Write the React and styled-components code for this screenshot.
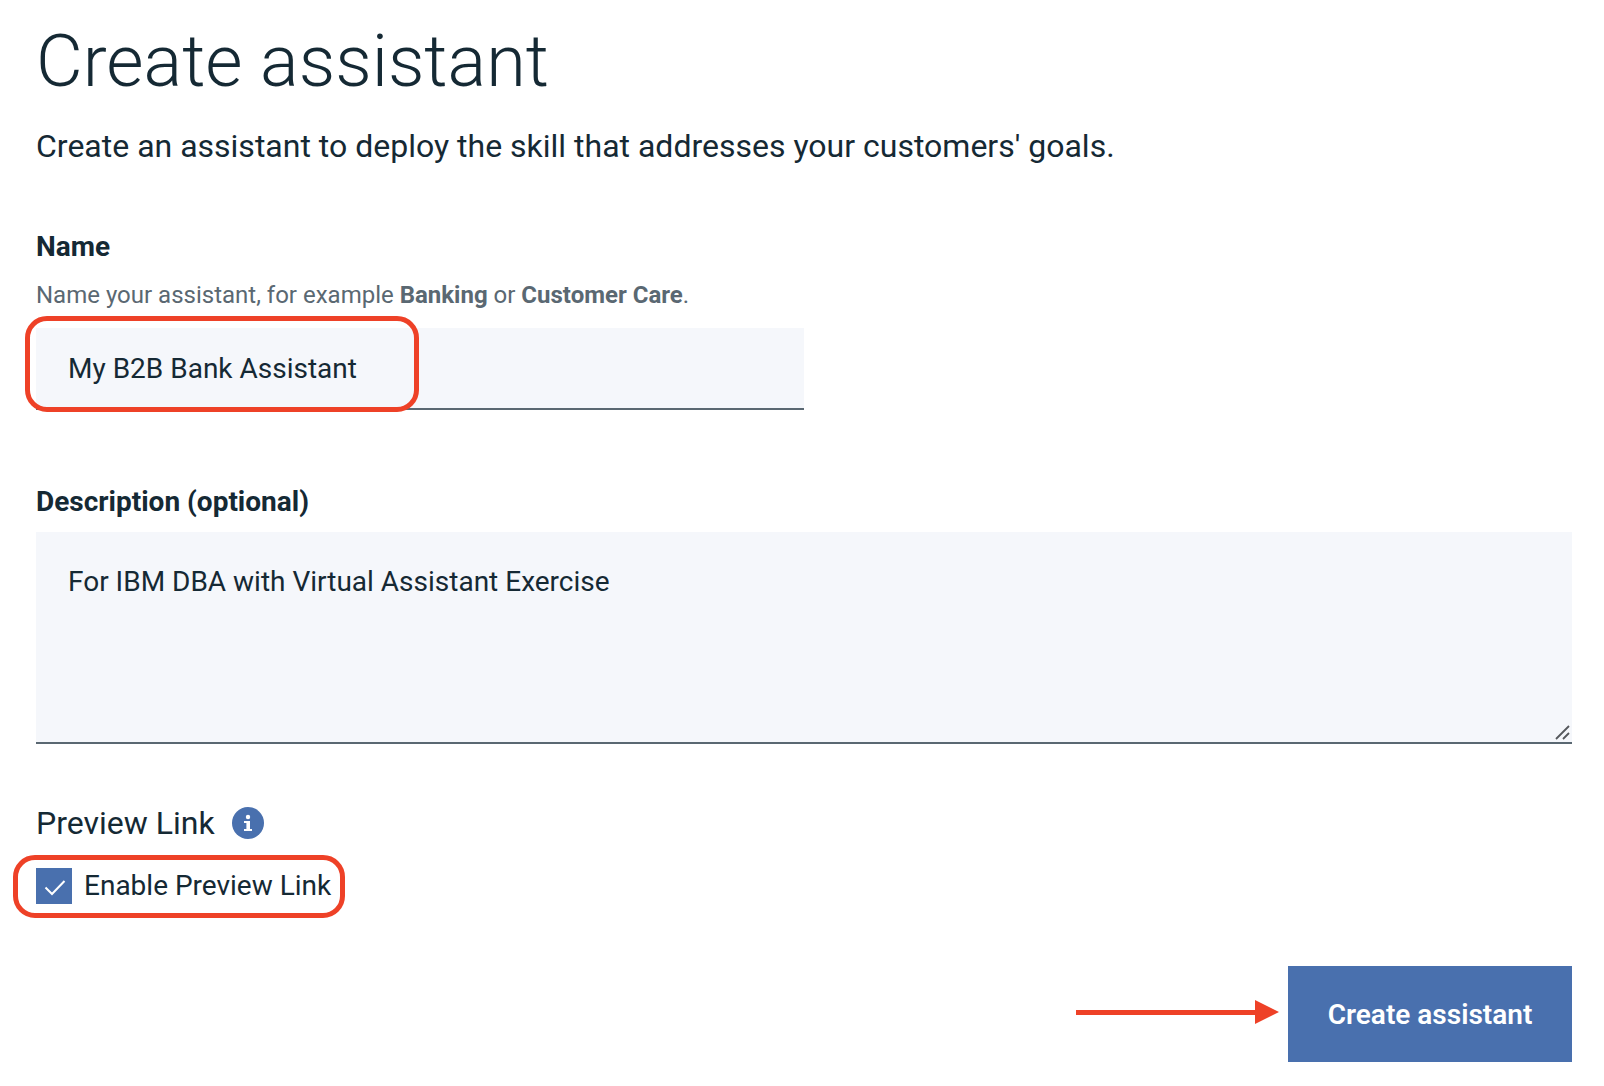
import React, { useState } from "react";
import styled, { createGlobalStyle } from "styled-components";

const ink = "#152934";
const slate = "#5a6872";
const field = "#f5f7fb";
const blue = "#4970ae";
const red = "#ee4127";

const GlobalStyle = createGlobalStyle`
  *, *::before, *::after { box-sizing: border-box; }
  body {
    margin: 0;
    background: #fff;
    color: ${ink};
    font-family: Roboto, "Liberation Sans", sans-serif;
  }
`;

const Page = styled.form`
  display: flex;
  flex-direction: column;
  padding: 22px 32px 24px 36px;
`;

const Title = styled.h1`
  margin: 0 0 24px;
  font-size: 72px;
  line-height: 80px;
  font-weight: 300;
`;

const Lead = styled.p`
  margin: 0 0 63px;
  font-size: 32px;
  line-height: 40px;
`;

const Label = styled.label`
  align-self: flex-start;
  margin-bottom: ${(p) => p.$gap};
  font-size: 28px;
  line-height: 36px;
  font-weight: 700;
`;

const Helper = styled.p`
  margin: 0 0 17px;
  font-size: 24px;
  line-height: 32px;
  color: ${slate};
`;

const Field = styled.div`
  position: relative;
  display: flex;
  width: ${(p) => p.$width};
  margin-bottom: ${(p) => p.$gap};
`;

const TextInput = styled.input`
  width: 100%;
  height: 82px;
  padding: 0 32px;
  border: 0;
  border-bottom: 2px solid ${slate};
  border-radius: 0;
  background: ${field};
  color: ${ink};
  font: inherit;
  font-size: 28px;
  outline: none;
`;

const TextArea = styled.textarea`
  width: 100%;
  height: 212px;
  padding: 32px;
  border: 0;
  border-bottom: 2px solid ${slate};
  border-radius: 0;
  background: ${field};
  color: ${ink};
  font: inherit;
  font-size: 28px;
  line-height: 36px;
  resize: none;
  outline: none;
`;

const Grip = styled.svg`
  position: absolute;
  right: 2px;
  bottom: 4px;
  pointer-events: none;
`;

const Highlight = styled.span`
  position: absolute;
  inset: ${(p) => p.$inset};
  width: ${(p) => p.$width};
  border: 5px solid ${red};
  border-radius: 22px;
  pointer-events: none;
`;

const SectionHead = styled.div`
  display: flex;
  align-items: center;
  gap: 17px;
  margin-bottom: 25px;
`;

const SectionTitle = styled.h2`
  margin: 0;
  font-size: 32px;
  line-height: 40px;
  font-weight: 400;
`;

const InfoButton = styled.button`
  display: flex;
  padding: 0;
  border: 0;
  background: none;
`;

const CheckLabel = styled.label`
  position: relative;
  display: flex;
  align-items: center;
  align-self: flex-start;
  gap: 12px;
  margin-bottom: 62px;
  font-size: 28px;
  line-height: 36px;
`;

const CheckBox = styled.input`
  appearance: none;
  width: 36px;
  height: 36px;
  margin: 0;
  border: 2px solid ${blue};
  background: #fff;
  &:checked { background: ${blue}; }
  &:not(:checked) + svg { display: none; }
`;

const Tick = styled.svg`
  position: absolute;
  left: 0;
  top: 0;
  pointer-events: none;
`;

const Footer = styled.div`
  display: flex;
  justify-content: flex-end;
  align-items: center;
  gap: 9px;
`;

const Arrow = styled.svg`
  margin-bottom: 4px;
`;

const Submit = styled.button`
  height: 96px;
  width: 284px;
  border: 0;
  background: ${blue};
  color: #fff;
  font: inherit;
  font-size: 28px;
  font-weight: 600;
`;

export default function App() {
  const [name, setName] = useState("My B2B Bank Assistant");
  const [description, setDescription] = useState(
    "For IBM DBA with Virtual Assistant Exercise"
  );
  const [preview, setPreview] = useState(true);

  return (
    <>
      <GlobalStyle />
      <Page onSubmit={(e) => e.preventDefault()}>
        <Title>Create assistant</Title>
        <Lead>
          Create an assistant to deploy the skill that addresses your customers' goals.
        </Lead>

        <Label htmlFor="name" $gap="14px">Name</Label>
        <Helper id="name-help">
          Name your assistant, for example <b>Banking</b> or <b>Customer Care</b>.
        </Helper>
        <Field $width="50%" $gap="74px">
          <TextInput
            id="name"
            type="text"
            aria-describedby="name-help"
            value={name}
            onChange={(e) => setName(e.target.value)}
          />
          <Highlight $inset="-12px auto -2px -11px" $width="394px" />
        </Field>

        <Label htmlFor="description" $gap="12px">Description (optional)</Label>
        <Field $width="100%" $gap="59px">
          <TextArea
            id="description"
            value={description}
            onChange={(e) => setDescription(e.target.value)}
          />
          <Grip width="16" height="16" viewBox="0 0 16 16" aria-hidden="true">
            <path d="M2 15 15 2M9 15l6-6" fill="none" stroke="#55585c" strokeWidth="1.8" />
          </Grip>
        </Field>

        <SectionHead>
          <SectionTitle>Preview Link</SectionTitle>
          <InfoButton type="button" aria-label="About the preview link">
            <svg width="32" height="32" viewBox="0 0 32 32" aria-hidden="true">
              <circle cx="16" cy="16" r="16" fill={blue} />
              <circle cx="16" cy="10" r="2.2" fill="#fff" />
              <path d="M12 14h6v8h2v2h-8v-2h2.4v-6H12z" fill="#fff" />
            </svg>
          </InfoButton>
        </SectionHead>

        <CheckLabel>
          <CheckBox
            type="checkbox"
            checked={preview}
            onChange={(e) => setPreview(e.target.checked)}
          />
          <Tick width="36" height="36" viewBox="0 0 36 36" aria-hidden="true">
            <path d="M9.5 19.5l6.5 6.5L28.5 13" fill="none" stroke="#fff" strokeWidth="2" />
          </Tick>
          Enable Preview Link
          <Highlight $inset="-13px auto -14px -23px" $width="332px" />
        </CheckLabel>

        <Footer>
          <Arrow width="203" height="24" viewBox="0 0 203 24" aria-hidden="true">
            <path d="M0 10h179V0l24 12-24 12v-9H0z" fill={red} />
          </Arrow>
          <Submit type="submit">Create assistant</Submit>
        </Footer>
      </Page>
    </>
  );
}
